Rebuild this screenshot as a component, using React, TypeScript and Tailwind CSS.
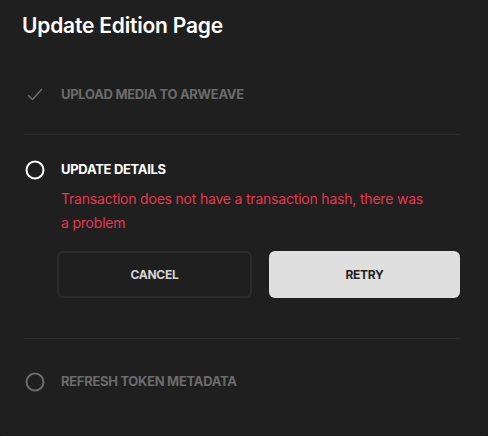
import React from 'react';

const font = { fontFamily: 'Inter, "Liberation Sans", sans-serif' };

const Circle: React.FC<{ color: string }> = ({ color }) => (
  <svg width="20" height="20" viewBox="0 0 20 20" fill="none">
    <circle cx="10" cy="10" r="8.5" stroke={color} strokeWidth="2" />
  </svg>
);

const Check: React.FC = () => (
  <svg width="16" height="14" viewBox="0 0 16 14" fill="none">
    <polyline points="1.5,7.5 5.5,11.5 14.5,1.5" stroke="#6b6b6b" strokeWidth="1.6" strokeLinecap="round" strokeLinejoin="round" />
  </svg>
);

export default function App() {
  return (
    <div className="min-h-screen bg-[#111111]" style={font}>
      <div className="w-[488px] h-[436px] bg-[#1f1f1f] rounded-b-[4px] pl-6 pr-[27px] pt-[12px]">
        <h2 className="text-[21px] leading-[28px] font-semibold text-white -ml-[2px] tracking-[-0.2px]">Update Edition Page</h2>

        {/* step 1 - done */}
        <div className="mt-[16px] pt-[29px] pb-[29px] border-b border-[#2c2c2c] mr-[1px]">
          <div className="flex items-center h-5">
            <div className="w-[22px] flex justify-center"><Check /></div>
            <span className="ml-[15px] text-[13px] font-bold uppercase tracking-[-0.3px] text-[#6b6b6b]">Upload media to Arweave</span>
          </div>
        </div>

        {/* step 2 - active with error */}
        <div className="pt-[25px] pb-[40px] border-b border-[#2c2c2c] mr-[1px]">
          <div className="flex items-center h-5">
            <div className="w-[22px] flex justify-center"><Circle color="#ffffff" /></div>
            <span className="ml-[15px] text-[13px] font-bold uppercase tracking-[-0.3px] text-white">Update details</span>
          </div>
          <div className="ml-[33px]">
            <p className="mt-[7px] pl-[4px] pr-[36px] text-[14px] leading-[24px] tracking-[-0.2px] text-[#e8364f]">
              Transaction does not have a transaction hash, there was a problem
            </p>
            <div className="mt-4 flex gap-[17px]">
              <button className="flex-1 h-[47px] rounded-[6px] border-2 border-[#2b2b2b] text-[12px] font-bold text-[#d4d4d4] tracking-[-0.3px]">CANCEL</button>
              <button className="flex-1 h-[47px] rounded-[6px] bg-[#dfdfdf] text-[12px] font-bold text-[#1f1f1f] tracking-[-0.3px]">RETRY</button>
            </div>
          </div>
        </div>

        {/* step 3 - pending */}
        <div className="pt-[33px]">
          <div className="flex items-center h-5">
            <div className="w-[22px] flex justify-center"><Circle color="#6b6b6b" /></div>
            <span className="ml-[15px] text-[13px] font-bold uppercase tracking-[-0.3px] text-[#6b6b6b]">Refresh token metadata</span>
          </div>
        </div>
      </div>
    </div>
  );
}
